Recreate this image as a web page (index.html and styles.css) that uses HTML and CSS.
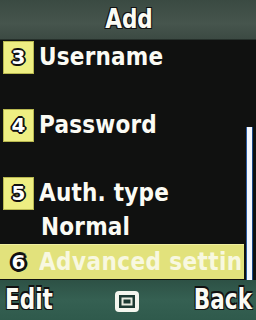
FILE: index.html
```html
<!DOCTYPE html>
<html>
<head>
<meta charset="utf-8">
<link rel="stylesheet" href="styles.css">
</head>
<body>
<div class="screen">
  <header class="title"><span class="title-text">Add</span></header>
  <div class="list">
    <div class="items">
      <div class="item">
        <div class="line"><span class="badge">3</span><span class="label">Username</span></div>
        <div class="line"></div>
      </div>
      <div class="item">
        <div class="line"><span class="badge">4</span><span class="label">Password</span></div>
        <div class="line"></div>
      </div>
      <div class="item">
        <div class="line"><span class="badge">5</span><span class="label">Auth. type</span></div>
        <div class="line"><span class="value">Normal</span></div>
      </div>
      <div class="item selected">
        <div class="line"><span class="badge">6</span><span class="label">Advanced settin</span></div>
      </div>
    </div>
    <div class="scroll"><div class="thumb"></div></div>
  </div>
  <footer class="softkeys">
    <span class="key">Edit</span>
    <svg class="ok-icon" width="24" height="21" viewBox="0 0 24 21">
      <rect x="0" y="0" width="24" height="21" rx="4" fill="#f4f6ee"/>
      <rect x="4" y="4" width="16" height="13" fill="#1c3a32"/>
      <rect x="7.5" y="7.5" width="9" height="6" fill="none" stroke="#e8ece0" stroke-width="2"/>
    </svg>
    <span class="key">Back</span>
  </footer>
</div>
</body>
</html>
```
FILE: styles.css
```css
html, body {
  margin: 0;
  padding: 0;
  background: #0e0f0e;
}
.screen {
  width: 256px;
  height: 320px;
  overflow: hidden;
  display: flex;
  flex-direction: column;
  font-family: "DejaVu Sans Condensed", "DejaVu Sans", sans-serif;
  font-stretch: condensed;
  font-weight: bold;
  color: #fbfbf4;
}
.title {
  height: 40px;
  flex: none;
  display: flex;
  justify-content: center;
  align-items: center;
  background: linear-gradient(#3a4a42, #46554d 60%, #3c4a43);
  border-bottom: 1px solid #26302b;
  box-sizing: border-box;
}
.title-text {
  display: inline-block;
  font-size: 24px;
  margin-left: 2px;
  margin-top: -2px;
  transform: scaleY(1.08);
  text-shadow: 1px 1px 0 #111, -1px -1px 0 #111, 1px -1px 0 #111, -1px 1px 0 #111;
}
.list {
  height: 240px;
  flex: none;
  display: flex;
  background: #101110;
}
.items {
  width: 244px;
  flex: none;
  overflow: hidden;
}
.item {
  padding-left: 3px;
}
.line {
  height: 34px;
  display: flex;
  align-items: center;
  white-space: nowrap;
}
.badge {
  width: 31px;
  height: 33px;
  flex: none;
  display: flex;
  justify-content: center;
  align-items: center;
  background: #eeee82;
  border: 1px solid #b8b850;
  box-sizing: border-box;
  font-family: "DejaVu Sans", sans-serif;
  font-stretch: normal;
  font-size: 20px;
  color: #ffffff;
  text-shadow:
    1px 0 0 #111, -1px 0 0 #111, 0 1px 0 #111, 0 -1px 0 #111,
    1px 1px 0 #111, -1px -1px 0 #111, 1px -1px 0 #111, -1px 1px 0 #111,
    2px 0 0 #111, -2px 0 0 #111, 0 2px 0 #111, 0 -2px 0 #111;
}
.label, .value {
  display: inline-block;
  font-size: 24px;
  margin-left: 5px;
  letter-spacing: 0.2px;
  transform: scaleY(1.06);
}
.value {
  margin-left: 38px;
}
.selected {
  background: #e2e27c;
  border-top: 1px solid #f0f0a0;
  height: 35px;
  box-sizing: border-box;
  overflow: hidden;
}
.selected .line {
  height: 33px;
}
.selected .badge {
  background: transparent;
  border: none;
  text-shadow:
    1px 0 0 #111, -1px 0 0 #111, 0 1px 0 #111, 0 -1px 0 #111,
    2px 0 0 #111, -2px 0 0 #111, 0 2px 0 #111, 0 -2px 0 #111,
    2px 2px 0 #111, -2px -2px 0 #111, 2px -2px 0 #111, -2px 2px 0 #111,
    3px 0 0 #111, -3px 0 0 #111, 0 3px 0 #111, 0 -3px 0 #111;
}
.selected .label {
  color: #f8f8e0;
  letter-spacing: 0.4px;
}
.scroll {
  width: 12px;
  flex: none;
  display: flex;
  flex-direction: column;
  padding-top: 87px;
  box-sizing: border-box;
}
.thumb {
  flex: 1;
  width: 5px;
  margin-left: 2px;
  background: #f4f8ff;
  border-left: 1px solid #2a5aa0;
  border-right: 1px solid #1d4a8a;
}
.softkeys {
  flex: 1;
  display: flex;
  justify-content: space-between;
  align-items: center;
  padding: 0 4px 2px 5px;
  background: linear-gradient(#2d5145, #356052 50%, #2f5a4c);
}
.key {
  display: inline-block;
  font-size: 24px;
  transform: scaleY(1.2);
  text-shadow: 1px 1px 0 #111, -1px -1px 0 #111, 1px -1px 0 #111, -1px 1px 0 #111;
}
.ok-icon {
  margin-top: 4px;
  margin-left: 8px;
}
```
